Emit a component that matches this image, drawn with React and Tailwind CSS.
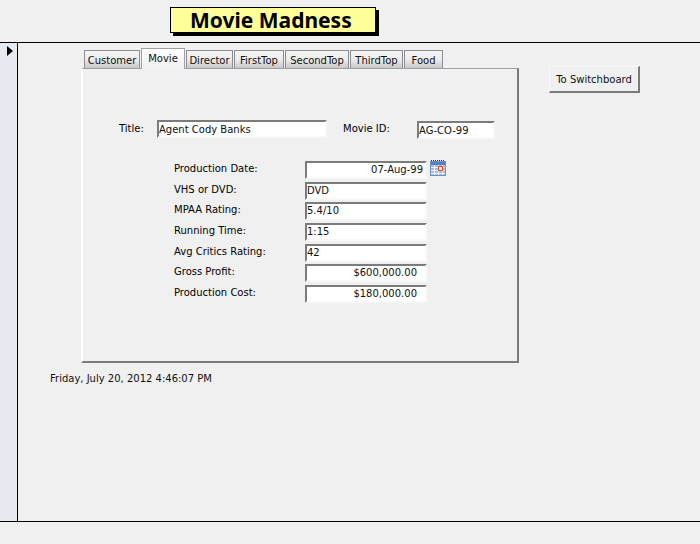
import React from 'react';

const TABS = [
  { label: 'Customer', width: 'w-[56px]' },
  { label: 'Movie', width: 'w-[44px]', active: true },
  { label: 'Director', width: 'w-[47px]' },
  { label: 'FirstTop', width: 'w-[50px]' },
  { label: 'SecondTop', width: 'w-[64px]' },
  { label: 'ThirdTop', width: 'w-[53px]' },
  { label: 'Food', width: 'w-[39px]' },
];

const ROWS = [
  { label: 'Production Date:', value: '07-Aug-99', align: 'text-right pr-[2px]', calendar: true },
  { label: 'VHS or DVD:', value: 'DVD' },
  { label: 'MPAA Rating:', value: '5.4/10' },
  { label: 'Running Time:', value: '1:15' },
  { label: 'Avg Critics Rating:', value: '42' },
  { label: 'Gross Profit:', value: '$600,000.00', align: 'text-right pr-[8px]' },
  { label: 'Production Cost:', value: '$180,000.00', align: 'text-right pr-[8px]' },
];

function Field({ value, className = '', align = '', leading = 'leading-[14px]' }) {
  return (
    <div className={`h-[18px] bg-white border-t-2 border-l-2 border-t-[#7b7b7b] border-l-[#7b7b7b] border-r-2 border-b-2 border-r-[#f8f8f8] border-b-[#f8f8f8] whitespace-nowrap ${leading} ${align} ${className}`}>
      {value}
    </div>
  );
}

function CalendarIcon() {
  return (
    <svg width="16" height="16" viewBox="0 0 16 16" className="ml-[3px] -mt-[1px] shrink-0">
      <rect x="0.5" y="1.5" width="15" height="14" fill="#a3bde6" stroke="#6f8fc4" />
      <rect x="1" y="2" width="14" height="3" fill="#4f7fd0" />
      <path d="M1 .5h1M3 .5h1M5 .5h1M7 .5h1M9 .5h1M11 .5h1M13 .5h1" stroke="#333" />
      <path d="M1 7.5h14M1 10.5h14M1 13.5h14M4.5 5v10M8.5 5v10M12.5 5v10" stroke="#eef3fb" />
      <rect x="8.5" y="6.5" width="4" height="4" fill="#f4f7fc" stroke="#e8502a" />
    </svg>
  );
}

export default function App() {
  return (
    <div className="w-[700px] h-[544px] overflow-hidden bg-[#f0f0f0] text-[10px] text-[#101010] font-['DejaVu_Sans',sans-serif] flex flex-col">
      {/* Form header */}
      <div className="h-[43px] shrink-0 border-b border-black pt-[7px] pl-[170px]">
        <div className="w-[206px] h-[26px] bg-[#ffff99] border border-black shadow-[3px_3px_0_#000] pl-[19px] font-['Noto_Sans',sans-serif] font-bold text-[21px] leading-[25px] text-black whitespace-nowrap">
          Movie Madness
        </div>
      </div>

      {/* Detail section */}
      <div className="h-[479px] shrink-0 flex border-b border-black">
        <div className="w-[18px] shrink-0 bg-[#e6eaf0] border-r border-black pt-[3px] pl-[7px]">
          <div className="w-0 h-0 border-y-[5px] border-y-transparent border-l-[6px] border-l-black" />
        </div>

        <div className="flex-1 min-w-0 pt-[5px]">
          <div className="flex items-start">
            <div className="w-[438px] ml-[63px] shrink-0">
              {/* Tab strip */}
              <div className="h-[20px] flex items-end gap-[1px] pl-[3px]">
                {TABS.map((tab) =>
                  tab.active ? (
                    <div key={tab.label} className={`${tab.width} h-[21px] relative z-10 -mb-[1px] border border-b-0 border-[#a0a0a8] bg-gradient-to-b from-white to-[#f0f0f0] text-center leading-[19px]`}>
                      {tab.label}
                    </div>
                  ) : (
                    <div key={tab.label} className={`${tab.width} h-[18px] border border-b-0 border-[#8c8c94] bg-gradient-to-b from-[#f4f4f4] via-[#ececec] to-[#c8c8c8] text-center leading-[19px]`}>
                      {tab.label}
                    </div>
                  )
                )}
              </div>

              {/* Tab page */}
              <div className="h-[295px] border-t border-t-[#a0a0a8] border-l-2 border-l-white border-r-2 border-r-[#7b7b7b] border-b-2 border-b-[#7b7b7b] pt-[51px]">
                <div className="flex items-start">
                  <div className="w-[38px] ml-[36px] leading-[17px] shrink-0 text-black">Title:</div>
                  <Field value="Agent Cody Banks" className="w-[170px]" leading="leading-[16px]" />
                  <div className="ml-[16px] w-[74px] shrink-0 leading-[17px] text-black">Movie ID:</div>
                  <Field value="AG-CO-99" className="w-[78px] mt-[1px]" leading="leading-[16px]" />
                </div>

                <div className="mt-[22px] ml-[91px] grid grid-cols-[131px_auto] grid-rows-[21px_20px_21px_21px_20px_21px_18px]">
                  {ROWS.map((row) => (
                    <React.Fragment key={row.label}>
                      <div className="leading-[15px] whitespace-nowrap text-black">{row.label}</div>
                      <div className="flex items-start">
                        <Field value={row.value} align={row.align} className="w-[122px]" />
                        {row.calendar && <CalendarIcon />}
                      </div>
                    </React.Fragment>
                  ))}
                </div>
              </div>
            </div>

            <button className="ml-[30px] mt-[18px] pt-[2px] w-[91px] h-[27px] bg-[#f0f0f0] border border-[#f8f8f8] border-r-2 border-b-2 border-r-[#7b7b7b] border-b-[#7b7b7b] text-center leading-[14px]">
              To Switchboard
            </button>
          </div>

          <div className="ml-[32px] mt-[7px] leading-[17px]">Friday, July 20, 2012 4:46:07 PM</div>
        </div>
      </div>
    </div>
  );
}
